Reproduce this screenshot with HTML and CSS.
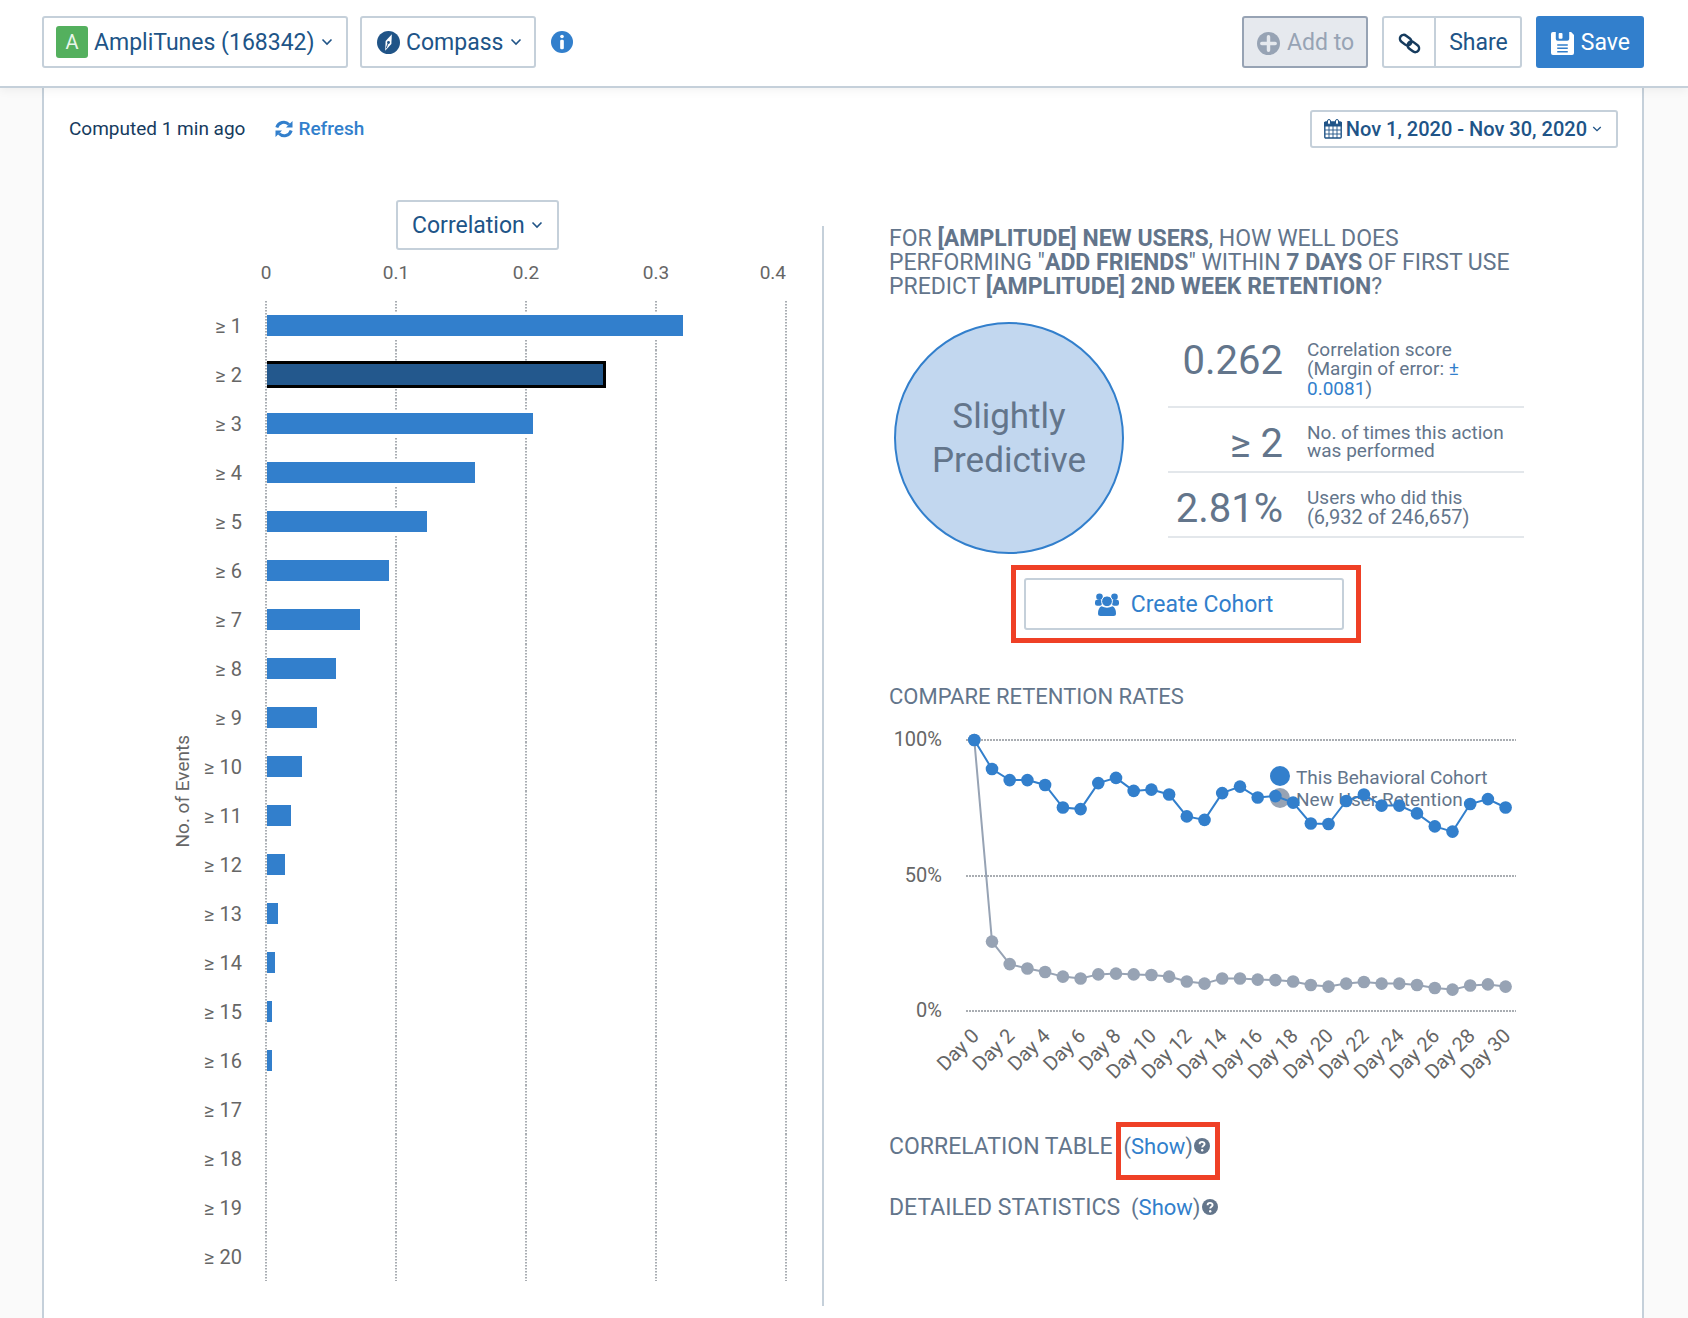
FILE: index.html
```html
<!DOCTYPE html>
<html lang="en">
<head>
<meta charset="utf-8">
<meta name="viewport" content="width=device-width, initial-scale=1">
<title>Compass</title>
<link rel="stylesheet" href="styles.css">
</head>
<body>
<header class="topbar">
  <div class="picker">
    <span class="badge">A</span>
    <select aria-label="Project"><option>AmpliTunes (168342)</option></select>
    <svg class="chevron" viewBox="0 0 12 8"><path d="M1.5 1.5 6 6l4.500-4.500"/></svg>
  </div>
  <div class="picker picker-chart">
    <svg class="icon-md" viewBox="0 0 24 24"><circle cx="12" cy="12" r="12" fill="#205487"/><path d="M15.500 3.500 15 13.500 8.500 20.500 9 10.500Z" fill="#fff"/><circle cx="12" cy="12" r="1.500" fill="#205487"/><path d="M12 12 9.500 18" stroke="#205487" stroke-width="1"/></svg>
    <select aria-label="Chart type"><option>Compass</option></select>
    <svg class="chevron" viewBox="0 0 12 8"><path d="M1.500 1.500 6 6l4.500-4.500"/></svg>
  </div>
  <button class="info" type="button" aria-label="Info">
    <svg viewBox="0 0 24 24"><circle cx="12" cy="12" r="12" fill="#327fcc"/><rect x="10" y="9.500" width="4" height="10.500" rx="1.500" fill="#fff"/><circle cx="12" cy="6" r="2" fill="#fff"/></svg>
  </button>
  <div class="actions">
    <button class="btn btn-disabled" type="button" disabled>
      <svg class="icon-md" viewBox="0 0 24 24"><circle cx="12" cy="12" r="12" fill="#97a3b4"/><path d="M12 5v14M5 12h14" stroke="#e6e9ee" stroke-width="3.600" stroke-linecap="round"/></svg>
      Add to
    </button>
    <div class="btn-group">
      <button class="btn-part" type="button" aria-label="Copy link">
        <svg class="icon-md" viewBox="0 0 24 24" fill="none" stroke="#163b5e" stroke-width="2.600"><rect x="1.500" y="4.500" width="13" height="8" rx="4" transform="rotate(38 8 8.500)"/><rect x="9.500" y="11.500" width="13" height="8" rx="4" transform="rotate(38 16 15.500)"/></svg>
      </button>
      <button class="btn-part btn-share" type="button">Share</button>
    </div>
    <button class="btn btn-primary" type="button">
      <svg class="icon-md" viewBox="0 0 24 24"><path d="M2 0h3v7a2 2 0 0 0 2 2h10a2 2 0 0 0 2-2V0h2l3 3v19a2 2 0 0 1-2 2H2a2 2 0 0 1-2-2V2a2 2 0 0 1 2-2Z" fill="#fff"/><rect x="8" y="1" width="4" height="6" rx="1" fill="#fff"/><path d="M6.500 13.500h11M6.500 17h11M6.500 20.500h11" stroke="#327fcc" stroke-width="1.600"/></svg>
      Save
    </button>
  </div>
</header>

<main class="card">
  <div class="meta">
    <span>Computed 1 min ago</span>
    <button class="refresh" type="button">
      <svg viewBox="0 0 18 18" fill="none" stroke="#327fcc" stroke-width="3"><path d="M1.800 7.500A7.300 7.300 0 0 1 14 4.500"/><path d="M16.200 10.500A7.300 7.300 0 0 1 4 13.500"/><path d="M17.500 1v6.500H11ZM.5 17v-6.500H7Z" fill="#327fcc" stroke="none"/></svg>
      Refresh
    </button>
    <button class="date" type="button" aria-haspopup="dialog">
      <svg class="calendar" viewBox="0 0 18 20"><rect x=".8" y="3" width="16.400" height="16" rx="1" fill="#fff" stroke="#205487" stroke-width="1.400"/><path d="M0 3h18v4.500H0Z" fill="#205487"/><path d="M1 11h16M1 15h16M5 7v12M9 7v12M13 7v12" stroke="#205487" stroke-width=".9"/><rect x="3.500" y=".5" width="3" height="5" rx="1.500" fill="#fff" stroke="#205487"/><rect x="11.500" y=".5" width="3" height="5" rx="1.500" fill="#fff" stroke="#205487"/></svg>
      Nov 1, 2020 - Nov 30, 2020
      <svg class="chevron chevron-sm" viewBox="0 0 12 8"><path d="M1.500 1.500 6 6l4.500-4.500"/></svg>
    </button>
  </div>

  <div class="columns">
    <section class="left">
      <div class="metric-row">
        <div class="picker picker-metric">
          <select aria-label="Metric"><option>Correlation</option></select>
          <svg class="chevron" viewBox="0 0 12 8"><path d="M1.500 1.500 6 6l4.500-4.500"/></svg>
        </div>
      </div>
      <div class="axis"><span>0</span><span>0.1</span><span>0.2</span><span>0.3</span><span>0.4</span></div>
      <div class="chart">
        <div class="axis-title">No. of Events</div>
        <ol class="bars">
          <li><span>≥ 1</span><div><i style="width:80%"></i></div></li>
          <li class="selected"><span>≥ 2</span><div><i style="width:65.200%"></i></div></li>
          <li><span>≥ 3</span><div><i style="width:51.200%"></i></div></li>
          <li><span>≥ 4</span><div><i style="width:40%"></i></div></li>
          <li><span>≥ 5</span><div><i style="width:30.800%"></i></div></li>
          <li><span>≥ 6</span><div><i style="width:23.400%"></i></div></li>
          <li><span>≥ 7</span><div><i style="width:17.800%"></i></div></li>
          <li><span>≥ 8</span><div><i style="width:13.300%"></i></div></li>
          <li><span>≥ 9</span><div><i style="width:9.600%"></i></div></li>
          <li><span>≥ 10</span><div><i style="width:6.800%"></i></div></li>
          <li><span>≥ 11</span><div><i style="width:4.600%"></i></div></li>
          <li><span>≥ 12</span><div><i style="width:3.400%"></i></div></li>
          <li><span>≥ 13</span><div><i style="width:2.100%"></i></div></li>
          <li><span>≥ 14</span><div><i style="width:1.600%"></i></div></li>
          <li><span>≥ 15</span><div><i style="width:1%"></i></div></li>
          <li><span>≥ 16</span><div><i style="width:1%"></i></div></li>
          <li><span>≥ 17</span><div></div></li>
          <li><span>≥ 18</span><div></div></li>
          <li><span>≥ 19</span><div></div></li>
          <li><span>≥ 20</span><div></div></li>
        </ol>
      </div>
    </section>

    <section class="right">
      <h2 class="question">FOR <b>[AMPLITUDE] NEW USERS</b>, HOW WELL DOES PERFORMING "<b>ADD FRIENDS</b>" WITHIN <b>7 DAYS</b> OF FIRST USE PREDICT <b>[AMPLITUDE] 2ND WEEK RETENTION</b>?</h2>
      <div class="summary">
        <div class="verdict">Slightly<br>Predictive</div>
        <dl class="stats">
          <div><dd>0.262</dd><dt>Correlation score<br>(Margin of error: <a href="#margin">± 0.0081</a>)</dt></div>
          <div><dd>≥ 2</dd><dt>No. of times this action was performed</dt></div>
          <div><dd>2.81%</dd><dt>Users who did this<br><span class="count">(6,932 of 246,657)</span></dt></div>
        </dl>
      </div>
      <div class="callout callout-cohort">
        <button class="cohort" type="button">
          <svg viewBox="0 0 24 24" fill="#327fcc"><circle cx="4.500" cy="3.800" r="3.300"/><circle cx="19.500" cy="3.800" r="3.300"/><rect x="0" y="6.800" width="7" height="6" rx="2.200"/><rect x="17" y="6.800" width="7" height="6" rx="2.200"/><circle cx="12" cy="8.300" r="5.400" stroke="#fff"/><path d="M6.500 13.300Q12 16 17.500 13.300Q21 15 21 20.500Q21 23 18.500 23H5.500Q3 23 3 20.500Q3 15 6.500 13.300Z"/></svg>
          Create Cohort
        </button>
      </div>
      <h2 class="heading heading-rates">COMPARE RETENTION RATES</h2>
      <svg class="retention" id="retention" viewBox="0 0 635 370" role="img" aria-label="Retention rates by day"></svg>
      <div class="detail detail-table">
        <h2 class="heading">CORRELATION TABLE</h2>
        <div class="callout callout-show">(<a href="#table">Show</a>)<svg class="help" viewBox="0 0 16 16"><circle cx="8" cy="8" r="8" fill="#63758b"/><path d="M5.600 6.200C5.600 3 10.600 3.200 10.600 6 10.600 7.800 8.200 7.800 8.200 9.600" fill="none" stroke="#fff" stroke-width="1.900"/><circle cx="8.200" cy="12.200" r="1.200" fill="#fff"/></svg></div>
      </div>
      <div class="detail">
        <h2 class="heading">DETAILED STATISTICS</h2>
        <div class="show">(<a href="#statistics">Show</a>)<svg class="help" viewBox="0 0 16 16"><circle cx="8" cy="8" r="8" fill="#63758b"/><path d="M5.600 6.200C5.600 3 10.600 3.200 10.600 6 10.600 7.800 8.200 7.800 8.200 9.600" fill="none" stroke="#fff" stroke-width="1.900"/><circle cx="8.200" cy="12.200" r="1.200" fill="#fff"/></svg></div>
      </div>
    </section>
  </div>
</main>
<script src="chart.js"></script>
</body>
</html>
```
FILE: styles.css
```css
* { box-sizing: border-box; }

body {
  margin: 0;
  min-height: 100vh;
  display: flex;
  flex-direction: column;
  background: #fafafa;
  color: #63758b;
  font: 19px/24px Roboto, "Liberation Sans", sans-serif;
}

button, select {
  font: inherit;
  color: inherit;
  background: none;
  border: 0;
  padding: 0;
  cursor: pointer;
}
select { appearance: none; padding-top: 2px; }
a { color: #327fcc; text-decoration: none; }
h2, dl, dd, ol { margin: 0; padding: 0; font-weight: 400; }
svg { flex: none; display: block; }

/* Top bar */
.topbar {
  position: relative;
  z-index: 1;
  display: flex;
  align-items: center;
  height: 88px;
  padding: 0 44px 2px 42px;
  background: #fff;
  border-bottom: 2px solid #c5d0da;
  box-shadow: 0 2px 10px rgba(0, 0, 0, .06);
}
.picker {
  display: flex;
  align-items: center;
  height: 52px;
  padding: 0 13px 0 12px;
  border: 2px solid #c5d0da;
  border-radius: 3px;
  background: #fff;
  color: #205487;
  font-size: 23px;
}
.picker-chart { margin-left: 12px; padding: 0 12px 0 15px; }
.picker-chart select { margin-left: 6px; }
.badge {
  width: 32px;
  height: 32px;
  margin-right: 6px;
  border-radius: 3px;
  background: #54b05e;
  color: #e9f6ea;
  font-size: 20px;
  line-height: 32px;
  text-align: center;
}
.chevron {
  width: 12px;
  height: 8px;
  margin-left: 6px;
  fill: none;
  stroke: #205487;
  stroke-width: 1.6;
}
.chevron-sm { width: 10px; margin-left: 1px; }
.icon-md { width: 23px; height: 23px; }
.info { margin-left: 15px; }
.info svg { width: 22px; height: 22px; }

.actions { display: flex; gap: 14px; margin-left: auto; }
.btn, .btn-group {
  display: flex;
  align-items: center;
  height: 52px;
  border-radius: 3px;
  font-size: 23px;
}
.btn { gap: 7px; padding: 2px 14px 0 15px; }
.btn-disabled {
  padding: 2px 12px 0 13px;
  border: 2px solid #97a3b4;
  background: #e6e9ee;
  color: #97a3b4;
  cursor: default;
}
.btn-group { border: 2px solid #c5d0da; color: #205487; }
.btn-part { display: flex; align-items: center; height: 100%; padding: 2px 13px 0 14px; }
.btn-share { padding: 2px 12px 0 13px; border-left: 2px solid #c5d0da; }
.btn-primary { background: #327fcc; color: #fff; }

/* Card */
.card {
  flex: 1;
  margin: 0 44px 0 42px;
  padding: 22px 0 12px;
  background: #fff;
  border: solid #c5d0da;
  border-width: 0 2px;
}
.meta {
  display: flex;
  align-items: center;
  padding: 0 24px 0 25px;
  color: #163b5e;
}
.refresh {
  display: flex;
  align-items: center;
  gap: 5px;
  margin-left: 30px;
  color: #327fcc;
  font-weight: 500;
}
.refresh svg { width: 18px; height: 18px; }
.date {
  display: flex;
  align-items: center;
  gap: 4px;
  height: 38px;
  margin-left: auto;
  padding: 0 14px 0 12px;
  border: 2px solid #c5d0da;
  border-radius: 3px;
  color: #205487;
  font-size: 20px;
  font-weight: 500;
}
.calendar { width: 18px; height: 20px; }

.columns {
  display: grid;
  grid-template-columns: 778fr 820fr;
  margin-top: 52px;
}

/* Bar chart */
.left { padding: 0 35px 25px 128px; }
.metric-row { display: flex; justify-content: center; padding-right: 4px; }
.picker-metric { height: 50px; padding: 0 14px; }
.axis {
  display: flex;
  justify-content: space-between;
  margin: 11px 1px 16px 94px;
  color: #666;
}
.axis span { display: flex; justify-content: center; width: 0; }
.axis span:last-child { justify-content: flex-end; }
.chart { display: flex; align-items: center; color: #666; }
.axis-title {
  width: 22px;
  line-height: 22px;
  writing-mode: vertical-rl;
  transform: rotate(180deg);
}
.bars {
  flex: 1;
  list-style: none;
  font-size: 20px;
}
.bars li { display: flex; align-items: center; height: 49px; }
.bars span { width: 48px; text-align: right; }
.bars div {
  --dots: repeating-linear-gradient(#a9adb2 0 1px, #d0d3d6 1px 2px, #fff 2px 3px);
  flex: 1;
  display: flex;
  align-items: center;
  height: 49px;
  margin-left: 23px;
  padding-left: 2px;
  background:
    var(--dots) 0 0 / 2px 100% no-repeat,
    var(--dots) 25% 0 / 2px 100% no-repeat,
    var(--dots) 50% 0 / 2px 100% no-repeat,
    var(--dots) 75% 0 / 2px 100% no-repeat,
    var(--dots) 100% 0 / 2px 100% no-repeat;
}
.bars i {
  height: 21px;
  background: #327fcc;
  box-shadow: 0 3px #fff, 0 -3px #fff;
}
.bars .selected i {
  height: 27px;
  border: 3px solid #000;
  border-left: 0;
  background: #23588d;
  box-shadow: none;
}

/* Prediction summary */
.right {
  margin-top: 26px;
  padding: 1px 118px 0 65px;
  border-left: 2px solid #c5d0da;
}
.question, .heading { font-size: 23px; line-height: 24px; }
.question b { font-weight: 700; }
.summary {
  display: flex;
  align-items: flex-start;
  gap: 44px;
  margin: 23px 0 11px;
}
.verdict {
  display: flex;
  align-items: center;
  justify-content: center;
  flex: none;
  width: 230px;
  height: 232px;
  margin-left: 5px;
  padding-top: 2px;
  border: 2px solid #327fcc;
  border-radius: 50%;
  background: #c2d7ef;
  font-size: 35px;
  line-height: 44px;
  text-align: center;
}
.stats { flex: 1; padding-top: 3px; }
.stats > div {
  display: flex;
  gap: 24px;
  padding: 16px 0 7px;
  border-bottom: 2px solid #e3e7eb;
}
.stats dd { flex: none; width: 115px; font-size: 40px; line-height: 40px; text-align: right; }
.stats dt { line-height: 18px; }
.stats a, .count { line-height: 20px; }
.count { font-size: 20px; }

.callout { border: 5px solid #ef4026; }
.callout-cohort { width: 350px; margin-left: 122px; padding: 8px 12px 8px 8px; }
.cohort {
  display: flex;
  align-items: center;
  justify-content: center;
  gap: 12px;
  width: 100%;
  height: 52px;
  padding-top: 1px;
  border: 2px solid #c5d0da;
  border-radius: 3px;
  color: #327fcc;
  font-size: 23px;
}
.cohort svg { width: 24px; height: 24px; }

/* Retention chart */
.heading-rates { margin: 42px 0 15px; font-size: 22px; }
.retention { width: 100%; height: auto; overflow: visible; }
.retention text { font-size: 20px; fill: #666; }
.retention .legend { fill: #63758b; font-size: 19px; }
.retention .grid { stroke: #a9adb2; stroke-width: 2; stroke-dasharray: 2 1; }
.retention polyline { fill: none; stroke-width: 2; }
.cohort-line { stroke: #327fcc; }
.cohort-dot { fill: #327fcc; }
.new-line { stroke: #97a3b4; }
.new-dot { fill: #97a3b4; }

.detail { display: flex; margin-top: 16px; font-size: 22px; line-height: 24px; }
.detail-table { margin-top: 28px; }
.detail-table .heading { padding-top: 13px; }
.callout-show, .show { display: flex; }
.callout-show { margin-left: 4px; padding: 8px 5px 16px 2px; }
.show { margin-left: 11px; }
.help { width: 16px; height: 16px; margin: 3px 0 0 1px; }
```
FILE: chart.js
```js
const cohort = [100, 89.3, 85.2, 85.2, 83.4, 75.1, 74.5, 84.1, 86, 81.2, 81.7, 79.9, 71.8, 70.5, 80.4, 82.8,
  78.8, 79.3, 76.9, 69.2, 69, 77.5, 79.9, 75.8, 75.8, 72.9, 68.1, 66.2, 76.4, 78.2, 75.1];
const newUsers = [100, 25.6, 17.3, 15.7, 14.4, 12.7, 12, 13.5, 13.8, 13.5, 13.3, 12.7, 10.9, 10.1, 12, 12,
  11.6, 11.4, 10.9, 9.6, 9, 10.1, 10.7, 10.1, 10.1, 9.6, 8.5, 7.9, 9.4, 9.8, 9];

const x = day => (85.3 + day * 17.71).toFixed(1);
const y = pct => (287 - pct * 2.71).toFixed(1);

function series(values, name) {
  const points = values.map((v, i) => `${x(i)},${y(v)}`).join(' ');
  const dots = values.map((v, i) => `<circle class="${name}-dot" cx="${x(i)}" cy="${y(v)}" r="6.3"/>`).join('');
  return `<polyline class="${name}-line" points="${points}"/>${dots}`;
}

let svg = '';
for (const pct of [100, 50, 0]) {
  const line = Math.round(y(pct));
  svg += `<path class="grid" d="M77 ${line}H627"/>`;
  svg += `<text x="53" y="${line + 6}" text-anchor="end">${pct}%</text>`;
}
svg += '<circle class="cohort-dot" cx="391" cy="52" r="10"/><text class="legend" x="407" y="60">This Behavioral Cohort</text>';
svg += '<circle class="new-dot" cx="391" cy="74" r="10"/><text class="legend" x="407" y="82">New User Retention</text>';
svg += series(newUsers, 'new') + series(cohort, 'cohort');
for (let day = 0; day <= 30; day += 2) {
  svg += `<text text-anchor="end" transform="translate(${+x(day) + 6} 313) rotate(-45)">Day ${day}</text>`;
}
document.getElementById('retention').innerHTML = svg;
```
